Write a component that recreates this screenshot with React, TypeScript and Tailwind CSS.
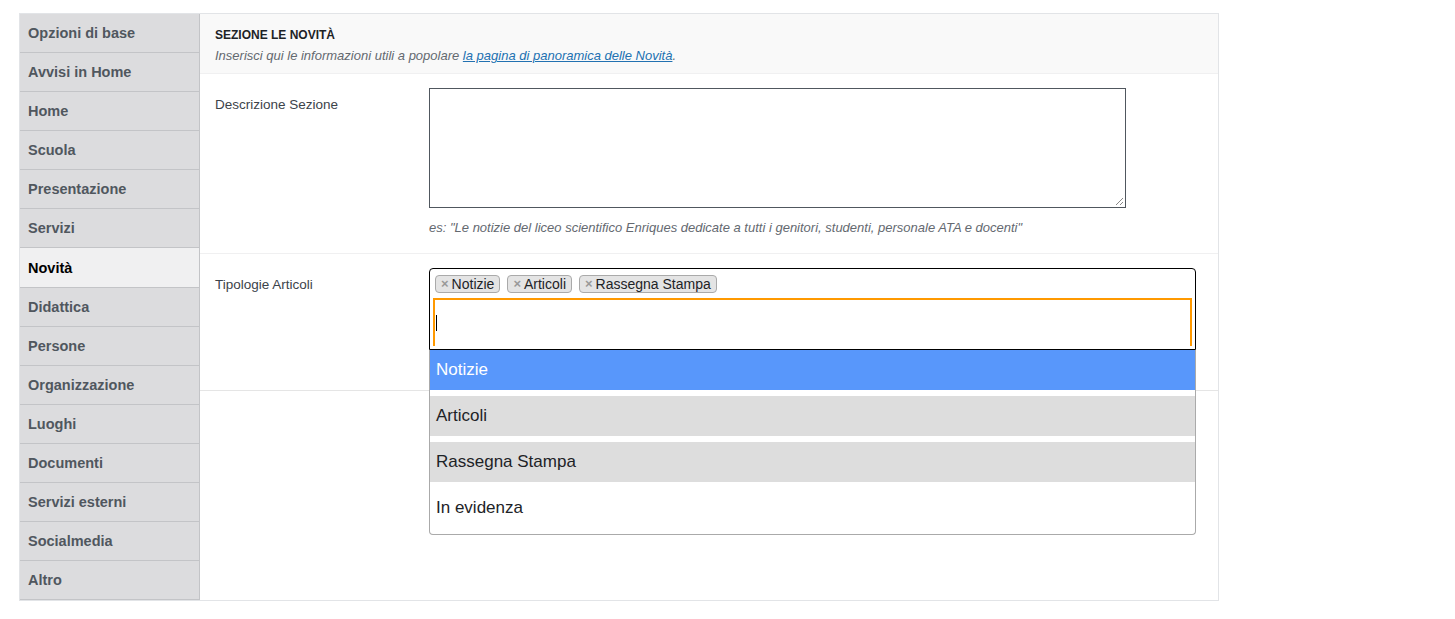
const menu = [
  "Opzioni di base",
  "Avvisi in Home",
  "Home",
  "Scuola",
  "Presentazione",
  "Servizi",
  "Novità",
  "Didattica",
  "Persone",
  "Organizzazione",
  "Luoghi",
  "Documenti",
  "Servizi esterni",
  "Socialmedia",
  "Altro",
]

const tags = ["Notizie", "Articoli", "Rassegna Stampa"]

const options = [
  { label: "Notizie", state: "hover" },
  { label: "Articoli", state: "selected" },
  { label: "Rassegna Stampa", state: "selected" },
  { label: "In evidenza", state: "none" },
]

export default function App() {
  return (
    <div className="min-h-[619px] bg-white pt-[13px] pl-[19px] font-['Liberation_Sans',Arial,sans-serif] text-[#3c434a]">
      <div className="flex w-[1200px] h-[588px] border border-[#e2e4e7] bg-white">
        <ul className="w-[180px] shrink-0 bg-[#dcdcde] border-r border-[#c3c4c7]">
          {menu.map((m) => (
            <li
              key={m}
              className={
                "h-[39px] border-b border-[#c3c4c7] pl-[8px] pt-[2px] flex items-center text-[14.5px] font-bold " +
                (m === "Novità" ? "bg-[#f0f0f1] text-black h-[40px]" : "text-[#50575e]")
              }
            >
              {m}
            </li>
          ))}
        </ul>

        <div className="flex-1">
          <div className="h-[60px] bg-[#f9f9f9] border-b border-[#f0f0f1] px-[15px] pt-[14px]">
            <h3 className="text-[12px] font-bold text-[#1d2327] leading-[15px]">SEZIONE LE NOVITÀ</h3>
            <p className="mt-[5px] text-[13px] italic text-[#646970] leading-[16px]">
              Inserisci qui le informazioni utili a popolare{" "}
              <a className="text-[#2271b1] underline" href="#">
                la pagina di panoramica delle Novità
              </a>
              .
            </p>
          </div>

          <div className="flex border-b border-[#f0f0f1] px-[15px] pt-[14px] pb-[17px]">
            <div className="w-[214px] shrink-0 pt-[9px] text-[13.5px] leading-[16px] text-[#3c434a]">
              Descrizione Sezione
            </div>
            <div>
              <div className="relative w-[697px] h-[120px] border border-[#50575e] bg-white">
                <svg className="absolute right-[1px] bottom-[1px]" width="9" height="9" viewBox="0 0 9 9">
                  <path d="M8 1 L1 8 M8 5 L5 8" stroke="#888" strokeWidth="1" />
                </svg>
              </div>
              <p className="mt-[12px] text-[13px] italic text-[#646970] leading-[16px]">
                es: "Le notizie del liceo scientifico Enriques dedicate a tutti i genitori, studenti, personale ATA e docenti"
              </p>
            </div>
          </div>

          <div className="flex h-[137px] border-b border-[#e5e5e5] px-[15px] pt-[14px]">
            <div className="w-[214px] shrink-0 pt-[9px] text-[13.5px] leading-[16px] text-[#3c434a]">
              Tipologie Articoli
            </div>
            <div className="relative w-[767px]">
              <div className="h-[82px] border border-black rounded-t-[4px] bg-white px-[5px] pt-[6px]">
                <div className="flex gap-[7px]">
                  {tags.map((t) => (
                    <span
                      key={t}
                      className="h-[18px] flex items-center gap-[3px] border border-[#aaaaaa] rounded-[4px] bg-[#e4e4e4] px-[5px] text-[14px] leading-[16px] text-[#1d2327]"
                    >
                      <span className="text-[#999] text-[13px] font-bold">×</span>
                      {t}
                    </span>
                  ))}
                </div>
                <div className="mt-[5px] -mx-[2px] h-[48px] border-t-2 border-x-2 border-[#ff9900] flex items-center pl-[1px]">
                  <span className="w-[1px] h-[16px] bg-black"></span>
                </div>
              </div>
              <div className="absolute left-0 right-0 top-[82px] bg-white border-x border-b border-[#aaaaaa] rounded-b-[4px] pb-[6px] flex flex-col gap-[6px] z-10">
                {options.map((o) => (
                  <div
                    key={o.label}
                    className={
                      "h-[40px] flex items-center px-[6px] text-[17px] " +
                      (o.state === "hover"
                        ? "bg-[#5897fb] text-white"
                        : o.state === "selected"
                        ? "bg-[#dddddd] text-[#1d2327]"
                        : "bg-white text-[#1d2327]")
                    }
                  >
                    {o.label}
                  </div>
                ))}
              </div>
            </div>
          </div>
        </div>
      </div>
    </div>
  )
}
